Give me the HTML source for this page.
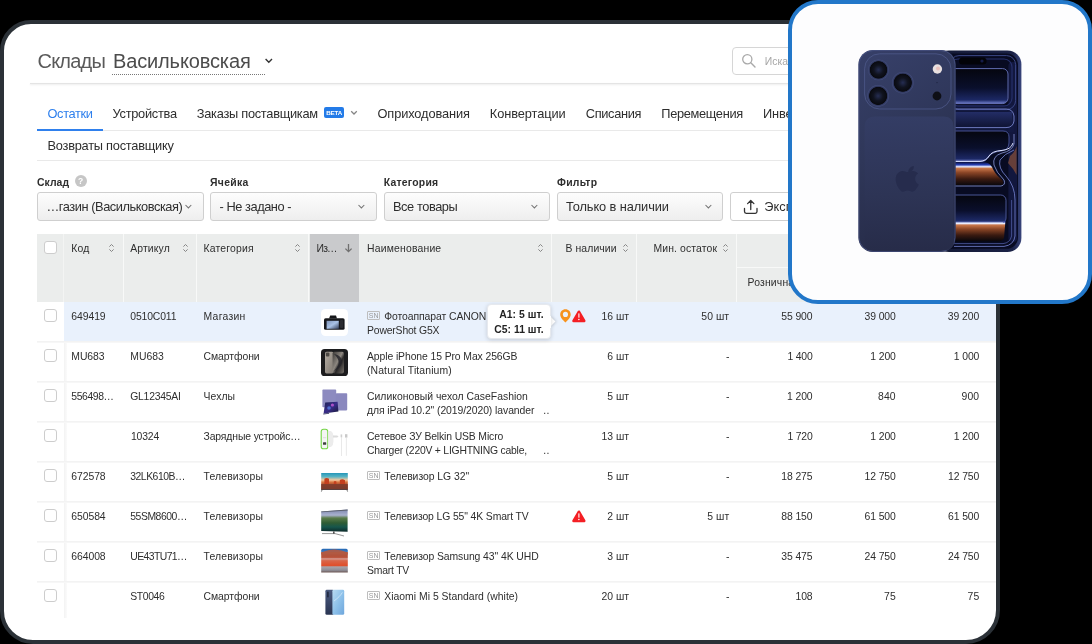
<!DOCTYPE html>
<html lang="ru"><head><meta charset="utf-8"><title>Склады</title>
<style>
html,body{margin:0;padding:0;background:#000;}
body{width:1092px;height:644px;position:relative;overflow:hidden;font-family:"Liberation Sans",sans-serif;}
#win{position:absolute;left:0;top:20px;width:1000px;height:624px;box-sizing:border-box;border:4px solid #2b3137;border-radius:31px 31px 34px 33px;background:#fff;overflow:hidden;}
#pg{position:absolute;left:-4px;top:-24px;width:1092px;height:644px;will-change:transform;}
#pg *{position:absolute;box-sizing:border-box;}
.t{white-space:nowrap;font-family:"Liberation Sans",sans-serif;}
.ln{height:1px;background:#e9e9e9;}
.sel{top:192.25px;width:166.5px;height:28.25px;border:1px solid #cfcfcf;border-radius:3px;background:linear-gradient(#fdfdfd,#eeeeee);}
.cb{left:43.6px;width:13.2px;height:13.2px;border:1px solid #cdcdcd;border-radius:3px;background:#fff;}
.vs{top:234px;width:1.2px;height:68px;background:#f8f9f8;}
.sn{width:12.75px;height:9.5px;border:1px solid #bdbdbd;border-radius:1px;font-size:7px;line-height:7.6px;text-align:center;color:#999;letter-spacing:-0.1px;font-family:"Liberation Sans",sans-serif;}
.rl{left:37px;width:959px;height:2px;background:linear-gradient(#f3f3f3 50%,#f7f7f7 50%);}
#card{position:absolute;left:788px;top:0;width:304px;height:304px;box-sizing:border-box;border:4px solid #2277c9;border-radius:30px;background:#fdfdfe;overflow:hidden;}
svg{overflow:visible;}

</style></head>
<body>
<div id="win"><div id="pg">
<!-- header -->
<div style="left:30px;top:82.5px;width:970px;height:1px;background:#e4e4e4;box-shadow:0 1px 2px rgba(0,0,0,.10);"></div>
<div style="left:732px;top:47px;width:240px;height:28px;border:1px solid #d6d6d6;border-radius:4px;background:#fff;"></div>
<svg style="left:741px;top:53px" width="16" height="16" viewBox="0 0 16 16"><circle cx="6.3" cy="6.3" r="4.6" fill="none" stroke="#a9a9a9" stroke-width="1.3"/><path d="M9.8 9.8 L14 14" stroke="#a9a9a9" stroke-width="1.4" stroke-linecap="round"/></svg>
<div style="left:112px;top:74px;width:153px;height:1px;border-top:1px dotted #777;"></div>
<svg style="left:264px;top:57px" width="10" height="8" viewBox="0 0 10 8"><path d="M1.6 2 L4.8 5.2 L8 2" fill="none" stroke="#333" stroke-width="1.4"/></svg>
<!-- tabs -->
<div class="ln" style="left:37px;top:130px;width:959px;"></div>
<div style="left:37px;top:129.3px;width:65.5px;height:2px;background:#2f80ed;"></div>
<div class="ln" style="left:37px;top:160px;width:959px;"></div>
<div style="left:324.25px;top:107px;width:19.75px;height:11px;background:#237be8;border-radius:2px;color:#fff;font-size:6.2px;line-height:12.4px;font-weight:700;text-align:center;letter-spacing:-0.15px;overflow:hidden;">BETA</div>
<svg style="left:349px;top:109px" width="10" height="8" viewBox="0 0 10 8"><path d="M2.2 2.2 L5 5 L7.8 2.2" fill="none" stroke="#858585" stroke-width="1.25"/></svg>
<!-- filters -->
<div style="left:74.6px;top:174.7px;width:12.2px;height:12.2px;border-radius:50%;background:#c6c6c6;color:#fff;font-size:8.5px;line-height:12.2px;font-weight:700;text-align:center;">?</div>
<div class="sel" style="left:37px;"></div>
<div class="sel" style="left:210.2px;width:166.4px;"></div>
<div class="sel" style="left:383.5px;width:166px;"></div>
<div class="sel" style="left:557px;width:166.3px;"></div>
<div style="left:730.2px;top:192.25px;width:100px;height:28.25px;border:1px solid #cfcfcf;border-radius:3px;background:#fff;"></div>
<svg style="left:183.5px;top:203px" width="9" height="7" viewBox="0 0 9 7"><path d="M1.5 2 L4.4 4.9 L7.3 2" fill="none" stroke="#747474" stroke-width="1.05"/></svg>
<svg style="left:356.6px;top:203px" width="9" height="7" viewBox="0 0 9 7"><path d="M1.5 2 L4.4 4.9 L7.3 2" fill="none" stroke="#747474" stroke-width="1.05"/></svg>
<svg style="left:529.9px;top:203px" width="9" height="7" viewBox="0 0 9 7"><path d="M1.5 2 L4.4 4.9 L7.3 2" fill="none" stroke="#747474" stroke-width="1.05"/></svg>
<svg style="left:703.6px;top:203px" width="9" height="7" viewBox="0 0 9 7"><path d="M1.5 2 L4.4 4.9 L7.3 2" fill="none" stroke="#747474" stroke-width="1.05"/></svg>
<svg style="left:743.3px;top:198.7px" width="16" height="16" viewBox="0 0 16 16"><path d="M1.5 9.5 V12.6 Q1.5 14.3 3.2 14.3 H12.3 Q14 14.3 14 12.6 V9.5" fill="none" stroke="#333" stroke-width="1.3" stroke-linecap="round"/><path d="M7.75 10.5 V1.6 M4.6 4.6 L7.75 1.5 L10.9 4.6" fill="none" stroke="#333" stroke-width="1.3" stroke-linecap="round" stroke-linejoin="round"/></svg>
<!-- table header -->
<div style="left:37px;top:234px;width:959px;height:68.4px;background:#ebedec;"></div>
<div style="left:309.5px;top:234px;width:49.5px;height:68.4px;background:#c9cacc;"></div>
<div class="vs" style="left:62.8px;width:1.7px;background:#f3f4f3;"></div>
<div class="vs" style="left:123px;"></div>
<div class="vs" style="left:196.2px;"></div>
<div class="vs" style="left:308.3px;"></div>
<div class="vs" style="left:551px;"></div>
<div class="vs" style="left:636px;"></div>
<div class="vs" style="left:736px;"></div>
<div style="left:737px;top:267px;width:259px;height:1.2px;background:#f8f9f8;"></div>
<div class="cb" style="top:241px;"></div>
<!-- rows -->
<div style="left:64px;top:302.4px;width:932px;height:39.2px;background:#e9f1fc;"></div>
<div style="left:64.4px;top:342px;width:3px;height:276px;background:linear-gradient(to right,#f3f3f3,#fbfbfb);"></div>
<div class="cb" style="top:309px;"></div>
<div class="cb" style="top:349px;"></div>
<div class="cb" style="top:389px;"></div>
<div class="cb" style="top:429px;"></div>
<div class="cb" style="top:469px;"></div>
<div class="cb" style="top:509px;"></div>
<div class="cb" style="top:549px;"></div>
<div class="cb" style="top:589px;"></div>
<div class="rl" style="top:341px;"></div>
<div class="rl" style="top:381px;"></div>
<div class="rl" style="top:421px;"></div>
<div class="rl" style="top:461px;"></div>
<div class="rl" style="top:501px;"></div>
<div class="rl" style="top:541px;"></div>
<div class="rl" style="top:581px;"></div>
<svg style="left:108.25px;top:243px" width="7" height="10" viewBox="0 0 7 10"><path d="M1.4 3.6 L3.5 1.5 L5.6 3.6 M1.4 6.4 L3.5 8.5 L5.6 6.4" fill="none" stroke="#858585" stroke-width="1"/></svg>
<svg style="left:181.5px;top:243px" width="7" height="10" viewBox="0 0 7 10"><path d="M1.4 3.6 L3.5 1.5 L5.6 3.6 M1.4 6.4 L3.5 8.5 L5.6 6.4" fill="none" stroke="#858585" stroke-width="1"/></svg>
<svg style="left:294.0px;top:243px" width="7" height="10" viewBox="0 0 7 10"><path d="M1.4 3.6 L3.5 1.5 L5.6 3.6 M1.4 6.4 L3.5 8.5 L5.6 6.4" fill="none" stroke="#858585" stroke-width="1"/></svg>
<svg style="left:536.5px;top:243px" width="7" height="10" viewBox="0 0 7 10"><path d="M1.4 3.6 L3.5 1.5 L5.6 3.6 M1.4 6.4 L3.5 8.5 L5.6 6.4" fill="none" stroke="#858585" stroke-width="1"/></svg>
<svg style="left:621.5px;top:243px" width="7" height="10" viewBox="0 0 7 10"><path d="M1.4 3.6 L3.5 1.5 L5.6 3.6 M1.4 6.4 L3.5 8.5 L5.6 6.4" fill="none" stroke="#858585" stroke-width="1"/></svg>
<svg style="left:721.5px;top:243px" width="7" height="10" viewBox="0 0 7 10"><path d="M1.4 3.6 L3.5 1.5 L5.6 3.6 M1.4 6.4 L3.5 8.5 L5.6 6.4" fill="none" stroke="#858585" stroke-width="1"/></svg>
<svg style="left:343.75px;top:243px" width="9" height="10" viewBox="0 0 9 10"><path d="M4.5 1 V8.6 M1.4 5.6 L4.5 8.7 L7.6 5.6" fill="none" stroke="#707070" stroke-width="1.3"/></svg>
<!-- tooltip -->
<div style="left:547px;top:318.2px;width:7px;height:7px;background:#fff;transform:rotate(45deg);box-shadow:1px -1px 3px rgba(0,0,0,.15);"></div>
<div style="left:486.75px;top:303.75px;width:64.25px;height:35.5px;background:#fff;border-radius:4px;box-shadow:0 1px 4px rgba(0,0,0,.16);border:1px solid #e6e9ee;"></div>
<div style="left:545px;top:316px;width:6px;height:12px;background:#fff;"></div>
<!-- pin + warning -->
<svg style="left:559.7px;top:308.8px" width="11" height="13.6" viewBox="0 0 11 13.6"><path d="M5.45 0.2 C2.4 0.2 0.2 2.5 0.2 5.4 C0.2 8.6 3.4 11.4 5.45 13.4 C7.5 11.4 10.7 8.6 10.7 5.4 C10.7 2.5 8.5 0.2 5.45 0.2 Z" fill="#f7931e"/><circle cx="5.45" cy="5.4" r="2.55" fill="#eaf2fc"/></svg>
<svg style="left:571.5px;top:309.5px" width="14" height="12.6" viewBox="0 0 14 12.6"><path d="M6.9 1.7 L12.3 10.9 H1.5 Z" fill="#f41f24" stroke="#f41f24" stroke-width="2.5" stroke-linejoin="round"/><rect x="6.35" y="3.3" width="1.1" height="4.5" rx=".55" fill="#fff"/><circle cx="6.9" cy="9.5" r=".75" fill="#fff"/></svg>
<svg style="left:571.5px;top:509.5px" width="14" height="12.6" viewBox="0 0 14 12.6"><path d="M6.9 1.7 L12.3 10.9 H1.5 Z" fill="#f41f24" stroke="#f41f24" stroke-width="2.5" stroke-linejoin="round"/><rect x="6.35" y="3.3" width="1.1" height="4.5" rx=".55" fill="#fff"/><circle cx="6.9" cy="9.5" r=".75" fill="#fff"/></svg>
<!-- thumbnails -->
<svg style="left:321px;top:309px" width="27" height="27" viewBox="0 0 27 27">
<defs><linearGradient id="gcam" x1="0" y1="0" x2="1" y2="1"><stop offset="0" stop-color="#7f93b8"/><stop offset=".5" stop-color="#a9c2e6"/><stop offset="1" stop-color="#36415c"/></linearGradient></defs>
<rect width="27" height="27" rx="4.5" fill="#fff"/>
<path d="M8 9.6 L9.2 6.6 H15 L16 9.6 Z" fill="#15161a"/>
<rect x="3" y="9.2" width="20.6" height="11.6" rx="1.6" fill="#17181c"/>
<rect x="5.6" y="11.8" width="12.2" height="8" fill="url(#gcam)"/>
<rect x="19" y="11" width="3.2" height="8" rx="1" fill="#2b2c31"/>
</svg>
<svg style="left:321px;top:349px" width="27" height="27" viewBox="0 0 27 27">
<defs><linearGradient id="gti" x1="0" y1="0" x2="1" y2="1"><stop offset="0" stop-color="#b5ada3"/><stop offset="1" stop-color="#7e7770"/></linearGradient>
<linearGradient id="gti2" x1="0" y1="0" x2="1" y2="1"><stop offset="0" stop-color="#3b3836"/><stop offset=".45" stop-color="#8d8780"/><stop offset=".6" stop-color="#2a2828"/><stop offset="1" stop-color="#77716b"/></linearGradient></defs>
<rect width="27" height="27" rx="3.6" fill="#1c1c1e"/>
<rect x="4" y="2.8" width="8.6" height="21.6" rx="1.6" fill="url(#gti)"/>
<rect x="4.8" y="3.6" width="3.6" height="3.8" rx="1" fill="#4c4844"/>
<rect x="11.6" y="2.8" width="11.4" height="21.6" rx="1.8" fill="url(#gti2)"/>
<path d="M13 5 C19 6 22 10 21 14 C20 18 16 21 13 22 C17 18 18 15 17.5 12 C17 9 15 7 13 5 Z" fill="#26242a" opacity=".85"/>
</svg>
<svg style="left:321px;top:388px" width="28" height="28" viewBox="0 0 28 28">
<defs><linearGradient id="gip" x1="0" y1="0" x2="1" y2="1"><stop offset="0" stop-color="#1b2350"/><stop offset=".5" stop-color="#3a2c8a"/><stop offset="1" stop-color="#141833"/></linearGradient></defs>
<rect x="1.4" y="1.6" width="13.8" height="17.6" rx=".8" fill="#8d8bc0"/>
<rect x="14.8" y="5.2" width="11.4" height="17.2" rx=".8" fill="#8a88be"/>
<path d="M4.2 14.6 L16.6 13.8 L17.4 23.4 L2.6 25.6 Z" fill="url(#gip)"/>
<circle cx="11.4" cy="17" r="1.6" fill="#c85ad8" opacity=".8"/><circle cx="8" cy="20" r="1.8" fill="#5a8af0" opacity=".7"/>
<path d="M2.4 25.6 L8 24.9 L8.2 25.8 L2.2 26.4 Z" fill="#3a3d66"/>
</svg>
<svg style="left:320px;top:428px" width="29" height="30" viewBox="0 0 29 30">
<rect x="1.2" y="1.2" width="6.6" height="19.6" rx="2.4" fill="#f4f5f4" stroke="#74d545" stroke-width="1.1"/>
<rect x="3" y="14.2" width="3.2" height="2.6" rx=".5" fill="#3c3f3c"/>
<rect x="3" y="9.2" width="3.2" height="1" fill="#dcdcdc"/>
<path d="M8.2 3 H11 Q13.4 4.6 13.4 8 V14 Q13.4 17.6 11 19 H8.2 Z" fill="#ececec"/>
<path d="M13 7.6 H17.2 L18.6 8.6 L17.2 9.6 H13 Z" fill="#dcdcdc"/>
<rect x="20.6" y="6.4" width="1.6" height="3" fill="#cfcfcf"/><rect x="21.1" y="9" width=".7" height="19" fill="#e0e0e0"/>
<rect x="25" y="6.2" width="2.4" height="3.4" fill="#c9c9c9"/><rect x="25.9" y="9.4" width=".7" height="18.4" fill="#e0e0e0"/>
</svg>
<svg style="left:321px;top:472px" width="27" height="21" viewBox="0 0 27 21">
<defs><linearGradient id="gtv1" x1="0" y1="0" x2="0" y2="1"><stop offset="0" stop-color="#2596b8"/><stop offset=".22" stop-color="#58b4c4"/><stop offset=".42" stop-color="#f1c9a0"/><stop offset=".55" stop-color="#d9763f"/><stop offset=".72" stop-color="#a2482e"/><stop offset="1" stop-color="#6e3a30"/></linearGradient></defs>
<rect x="0.2" y="1" width="26.6" height="16.6" fill="url(#gtv1)"/>
<path d="M3.4 12.5 V6.8 Q5.6 5 8 6.8 V12.5 Z M12.8 12.5 V9.4 Q14 8.4 15.4 9.4 V12.5 Z M18.8 12.5 V8 Q21.4 6.4 24 8.2 V12.5 Z" fill="#c4401f"/><rect x=".2" y="12" width="26.6" height="5.6" fill="#7c3c2c" opacity=".85"/>
<rect x=".2" y="17.2" width="26.6" height=".8" fill="#4a3a3a"/>
<path d="M1 18 L.4 19.6 M26 18 L26.6 19.6" stroke="#555" stroke-width=".8"/>
</svg>
<svg style="left:321px;top:509px" width="27" height="28" viewBox="0 0 27 28">
<defs><linearGradient id="gtv2" x1="0" y1="0" x2="0" y2="1"><stop offset="0" stop-color="#7f88ae"/><stop offset=".25" stop-color="#a9b1cf"/><stop offset=".38" stop-color="#5a7c4a"/><stop offset=".6" stop-color="#2f5c34"/><stop offset=".78" stop-color="#17564c"/><stop offset="1" stop-color="#0d2a2a"/></linearGradient></defs>
<path d="M0.2 2.6 L26.6 0.6 V22.8 L0.2 22 Z" fill="url(#gtv2)"/>
<path d="M0.2 2.6 L26.6 0.6 V1.4 L0.2 3.3 Z" fill="#5b5f6b"/>
<path d="M1 24.6 H14 L23 27" fill="none" stroke="#8b8b8b" stroke-width=".9"/>
<rect x="12" y="22.4" width="1.6" height="2.4" fill="#555"/>
</svg>
<svg style="left:321px;top:548px" width="27" height="26" viewBox="0 0 27 26">
<defs><linearGradient id="gtv3" x1="0" y1="0" x2="0" y2="1"><stop offset="0" stop-color="#2468b4"/><stop offset=".12" stop-color="#3b78bc"/><stop offset=".16" stop-color="#a9563f"/><stop offset=".36" stop-color="#b9523a"/><stop offset=".42" stop-color="#d79a90"/><stop offset=".5" stop-color="#d8664a"/><stop offset=".7" stop-color="#e04e2a"/><stop offset=".76" stop-color="#a8a4aa"/><stop offset=".9" stop-color="#8f8d96"/><stop offset="1" stop-color="#6b5450"/></linearGradient></defs>
<path d="M0.2 2.4 Q.2 .8 1.8 .8 H25.2 Q26.8 .8 26.8 2.4 V24.6 H.2 Z" fill="url(#gtv3)"/>
<path d="M.2 4.4 Q8 1.2 14 1.4 Q21 1.6 26.8 4.6 V6.4 H.2 Z" fill="#b25a42" opacity=".9"/>
</svg>
<svg style="left:324.6px;top:589px" width="20" height="27" viewBox="0 0 20 27">
<defs><linearGradient id="gmi1" x1="0" y1="0" x2="0" y2="1"><stop offset="0" stop-color="#4b5b80"/><stop offset="1" stop-color="#2a3552"/></linearGradient>
<linearGradient id="gmi2" x1="0" y1="0" x2="1" y2="1"><stop offset="0" stop-color="#b8daf2"/><stop offset=".5" stop-color="#8fc2ea"/><stop offset="1" stop-color="#6ea6dc"/></linearGradient></defs>
<rect x=".4" y=".8" width="8.4" height="25" rx="1.4" fill="url(#gmi1)"/>
<rect x="2.2" y="2.4" width="1.4" height="6" rx=".7" fill="#1b2236"/>
<rect x="7.4" y=".8" width="11.8" height="25" rx="1.4" fill="url(#gmi2)"/>
<path d="M9 12 C13 9 16 6 17.4 3.4" fill="none" stroke="#d9ecfa" stroke-width=".9" opacity=".8"/>
</svg>

<div id="texts">
<span class="t" style="left:37.50px;top:48px;font-size:20px;line-height:26px;color:#5a5a5a;letter-spacing:-0.778px;">Склады</span>
<span class="t" style="left:113.00px;top:48px;font-size:20px;line-height:26px;color:#4c4c4c;letter-spacing:-0.137px;">Васильковская</span>
<span class="t" style="left:47.50px;top:104px;font-size:12.8px;line-height:19px;color:#2f80ed;letter-spacing:-0.345px;">Остатки</span>
<span class="t" style="left:112.50px;top:104px;font-size:12.8px;line-height:19px;color:#2e2e2e;letter-spacing:-0.260px;">Устройства</span>
<span class="t" style="left:196.75px;top:104px;font-size:12.8px;line-height:19px;color:#2e2e2e;letter-spacing:-0.265px;">Заказы поставщикам</span>
<span class="t" style="left:377.50px;top:104px;font-size:12.8px;line-height:19px;color:#2e2e2e;letter-spacing:-0.108px;">Оприходования</span>
<span class="t" style="left:489.75px;top:104px;font-size:12.8px;line-height:19px;color:#2e2e2e;letter-spacing:-0.079px;">Конвертации</span>
<span class="t" style="left:585.75px;top:104px;font-size:12.8px;line-height:19px;color:#2e2e2e;letter-spacing:-0.329px;">Списания</span>
<span class="t" style="left:661.25px;top:104px;font-size:12.8px;line-height:19px;color:#2e2e2e;letter-spacing:-0.320px;">Перемещения</span>
<span class="t" style="left:763.00px;top:104px;font-size:12.8px;line-height:19px;color:#2e2e2e;letter-spacing:-0.159px;">Инвентаризации</span>
<span class="t" style="left:47.50px;top:136px;font-size:12.8px;line-height:19px;color:#2e2e2e;letter-spacing:-0.239px;">Возвраты поставщику</span>
<span class="t" style="left:764.75px;top:54px;font-size:10.4px;line-height:15px;color:#a6a6a6;letter-spacing:-0.012px;">Искать</span>
<span class="t" style="left:37.00px;top:175px;font-size:10.4px;line-height:15px;color:#2e2e2e;font-weight:700;letter-spacing:0.058px;">Склад</span>
<span class="t" style="left:210.00px;top:175px;font-size:10.4px;line-height:15px;color:#2e2e2e;font-weight:700;letter-spacing:0.324px;">Ячейка</span>
<span class="t" style="left:383.75px;top:175px;font-size:10.4px;line-height:15px;color:#2e2e2e;font-weight:700;letter-spacing:0.239px;">Категория</span>
<span class="t" style="left:557.00px;top:175px;font-size:10.4px;line-height:15px;color:#2e2e2e;font-weight:700;letter-spacing:0.261px;">Фильтр</span>
<span class="t" style="left:46.50px;top:197px;font-size:12.8px;line-height:19px;color:#2e2e2e;letter-spacing:-0.439px;">…газин (Васильковская)</span>
<span class="t" style="left:219.50px;top:197px;font-size:12.8px;line-height:19px;color:#2e2e2e;letter-spacing:-0.439px;">- Не задано -</span>
<span class="t" style="left:393.00px;top:197px;font-size:12.8px;line-height:19px;color:#2e2e2e;letter-spacing:-0.418px;">Все товары</span>
<span class="t" style="left:566.00px;top:197px;font-size:12.8px;line-height:19px;color:#2e2e2e;letter-spacing:-0.092px;">Только в наличии</span>
<span class="t" style="left:764.25px;top:197px;font-size:12.8px;line-height:19px;color:#2e2e2e;letter-spacing:0.072px;">Экспорт</span>
<span class="t" style="left:71.25px;top:241px;font-size:10.4px;line-height:15px;color:#2e2e2e;letter-spacing:0.143px;">Код</span>
<span class="t" style="left:130.25px;top:241px;font-size:10.4px;line-height:15px;color:#2e2e2e;letter-spacing:0.121px;">Артикул</span>
<span class="t" style="left:203.50px;top:241px;font-size:10.4px;line-height:15px;color:#2e2e2e;letter-spacing:0.197px;">Категория</span>
<span class="t" style="left:316.50px;top:241px;font-size:10.4px;line-height:15px;color:#2e2e2e;letter-spacing:-0.842px;">Из…</span>
<span class="t" style="left:367.00px;top:241px;font-size:10.4px;line-height:15px;color:#2e2e2e;letter-spacing:0.193px;">Наименование</span>
<span class="t" style="left:565.50px;top:241px;font-size:10.4px;line-height:15px;color:#2e2e2e;letter-spacing:0.096px;">В наличии</span>
<span class="t" style="left:653.50px;top:241px;font-size:10.4px;line-height:15px;color:#2e2e2e;letter-spacing:0.124px;">Мин. остаток</span>
<span class="t" style="left:747.50px;top:275px;font-size:10.4px;line-height:15px;color:#2e2e2e;letter-spacing:0.178px;">Розничная</span>
<span class="t" style="left:71.25px;top:309px;font-size:10.4px;line-height:15px;color:#2e2e2e;letter-spacing:-0.056px;">649419</span>
<span class="t" style="left:130.25px;top:309px;font-size:10.4px;line-height:15px;color:#2e2e2e;letter-spacing:-0.136px;">0510C011</span>
<span class="t" style="left:203.50px;top:309px;font-size:10.4px;line-height:15px;color:#2e2e2e;letter-spacing:0.287px;">Магазин</span>
<span class="t" style="left:384.25px;top:309px;font-size:10.4px;line-height:15px;color:#2e2e2e;letter-spacing:-0.079px;">Фотоаппарат CANON</span>
<span class="t" style="left:367.00px;top:323px;font-size:10.4px;line-height:15px;color:#2e2e2e;letter-spacing:-0.167px;">PowerShot G5X</span>
<span class="t" style="left:601.60px;top:309px;font-size:10.4px;line-height:15px;color:#2e2e2e;letter-spacing:-0.039px;">16 шт</span>
<span class="t" style="left:701.35px;top:309px;font-size:10.4px;line-height:15px;color:#2e2e2e;letter-spacing:0.061px;">50 шт</span>
<span class="t" style="left:781.35px;top:309px;font-size:10.4px;line-height:15px;color:#2e2e2e;letter-spacing:-0.114px;">55 900</span>
<span class="t" style="left:864.60px;top:309px;font-size:10.4px;line-height:15px;color:#2e2e2e;letter-spacing:-0.114px;">39 000</span>
<span class="t" style="left:947.85px;top:309px;font-size:10.4px;line-height:15px;color:#2e2e2e;letter-spacing:-0.072px;">39 200</span>
<span class="t" style="left:71.25px;top:349px;font-size:10.4px;line-height:15px;color:#2e2e2e;letter-spacing:-0.030px;">MU683</span>
<span class="t" style="left:130.25px;top:349px;font-size:10.4px;line-height:15px;color:#2e2e2e;letter-spacing:0.020px;">MU683</span>
<span class="t" style="left:203.50px;top:349px;font-size:10.4px;line-height:15px;color:#2e2e2e;letter-spacing:-0.057px;">Смартфони</span>
<span class="t" style="left:367.00px;top:349px;font-size:10.4px;line-height:15px;color:#2e2e2e;letter-spacing:-0.094px;">Apple iPhone 15 Pro Max 256GB</span>
<span class="t" style="left:367.00px;top:363px;font-size:10.4px;line-height:15px;color:#2e2e2e;letter-spacing:0.126px;">(Natural Titanium)</span>
<span class="t" style="left:607.35px;top:349px;font-size:10.4px;line-height:15px;color:#2e2e2e;letter-spacing:-0.041px;">6 шт</span>
<span class="t" style="left:726.00px;top:349px;font-size:10.4px;line-height:15px;color:#2e2e2e;letter-spacing:0.000px;">-</span>
<span class="t" style="left:787.60px;top:349px;font-size:10.4px;line-height:15px;color:#2e2e2e;letter-spacing:-0.233px;">1 400</span>
<span class="t" style="left:870.35px;top:349px;font-size:10.4px;line-height:15px;color:#2e2e2e;letter-spacing:-0.133px;">1 200</span>
<span class="t" style="left:953.85px;top:349px;font-size:10.4px;line-height:15px;color:#2e2e2e;letter-spacing:-0.133px;">1 000</span>
<span class="t" style="left:71.25px;top:389px;font-size:10.4px;line-height:15px;color:#2e2e2e;letter-spacing:-0.390px;">556498…</span>
<span class="t" style="left:130.25px;top:389px;font-size:10.4px;line-height:15px;color:#2e2e2e;letter-spacing:-0.248px;">GL12345AI</span>
<span class="t" style="left:203.50px;top:389px;font-size:10.4px;line-height:15px;color:#2e2e2e;letter-spacing:0.079px;">Чехлы</span>
<span class="t" style="left:367.00px;top:389px;font-size:10.4px;line-height:15px;color:#2e2e2e;letter-spacing:0.009px;">Силиконовый чехол CaseFashion</span>
<span class="t" style="left:367.00px;top:403px;font-size:10.4px;line-height:15px;color:#2e2e2e;letter-spacing:-0.073px;">для iPad 10.2&quot; (2019/2020) lavander</span>
<span class="t" style="left:543.20px;top:403px;font-size:10.4px;line-height:15px;color:#2e2e2e;letter-spacing:0.409px;">..</span>
<span class="t" style="left:607.35px;top:389px;font-size:10.4px;line-height:15px;color:#2e2e2e;letter-spacing:-0.041px;">5 шт</span>
<span class="t" style="left:726.00px;top:389px;font-size:10.4px;line-height:15px;color:#2e2e2e;letter-spacing:0.000px;">-</span>
<span class="t" style="left:787.10px;top:389px;font-size:10.4px;line-height:15px;color:#2e2e2e;letter-spacing:-0.133px;">1 200</span>
<span class="t" style="left:878.10px;top:389px;font-size:10.4px;line-height:15px;color:#2e2e2e;letter-spacing:0.085px;">840</span>
<span class="t" style="left:961.60px;top:389px;font-size:10.4px;line-height:15px;color:#2e2e2e;letter-spacing:0.085px;">900</span>
<span class="t" style="left:131.00px;top:429px;font-size:10.4px;line-height:15px;color:#2e2e2e;letter-spacing:-0.161px;">10324</span>
<span class="t" style="left:203.50px;top:429px;font-size:10.4px;line-height:15px;color:#2e2e2e;letter-spacing:-0.127px;">Зарядные устройс…</span>
<span class="t" style="left:367.00px;top:429px;font-size:10.4px;line-height:15px;color:#2e2e2e;letter-spacing:-0.133px;">Сетевое ЗУ Belkin USB Micro</span>
<span class="t" style="left:367.00px;top:443px;font-size:10.4px;line-height:15px;color:#2e2e2e;letter-spacing:-0.229px;">Charger (220V + LIGHTNING cable,</span>
<span class="t" style="left:543.20px;top:443px;font-size:10.4px;line-height:15px;color:#2e2e2e;letter-spacing:0.409px;">..</span>
<span class="t" style="left:601.60px;top:429px;font-size:10.4px;line-height:15px;color:#2e2e2e;letter-spacing:-0.039px;">13 шт</span>
<span class="t" style="left:726.00px;top:429px;font-size:10.4px;line-height:15px;color:#2e2e2e;letter-spacing:0.000px;">-</span>
<span class="t" style="left:787.60px;top:429px;font-size:10.4px;line-height:15px;color:#2e2e2e;letter-spacing:-0.233px;">1 720</span>
<span class="t" style="left:870.35px;top:429px;font-size:10.4px;line-height:15px;color:#2e2e2e;letter-spacing:-0.133px;">1 200</span>
<span class="t" style="left:953.85px;top:429px;font-size:10.4px;line-height:15px;color:#2e2e2e;letter-spacing:-0.133px;">1 200</span>
<span class="t" style="left:71.25px;top:469px;font-size:10.4px;line-height:15px;color:#2e2e2e;letter-spacing:-0.056px;">672578</span>
<span class="t" style="left:130.25px;top:469px;font-size:10.4px;line-height:15px;color:#2e2e2e;letter-spacing:-0.482px;">32LK610B…</span>
<span class="t" style="left:203.50px;top:469px;font-size:10.4px;line-height:15px;color:#2e2e2e;letter-spacing:0.155px;">Телевизоры</span>
<span class="t" style="left:384.25px;top:469px;font-size:10.4px;line-height:15px;color:#2e2e2e;letter-spacing:-0.038px;">Телевизор LG 32&quot;</span>
<span class="t" style="left:607.35px;top:469px;font-size:10.4px;line-height:15px;color:#2e2e2e;letter-spacing:-0.041px;">5 шт</span>
<span class="t" style="left:726.00px;top:469px;font-size:10.4px;line-height:15px;color:#2e2e2e;letter-spacing:0.000px;">-</span>
<span class="t" style="left:781.35px;top:469px;font-size:10.4px;line-height:15px;color:#2e2e2e;letter-spacing:-0.114px;">18 275</span>
<span class="t" style="left:864.60px;top:469px;font-size:10.4px;line-height:15px;color:#2e2e2e;letter-spacing:-0.114px;">12 750</span>
<span class="t" style="left:948.10px;top:469px;font-size:10.4px;line-height:15px;color:#2e2e2e;letter-spacing:-0.114px;">12 750</span>
<span class="t" style="left:71.25px;top:509px;font-size:10.4px;line-height:15px;color:#2e2e2e;letter-spacing:-0.056px;">650584</span>
<span class="t" style="left:130.25px;top:509px;font-size:10.4px;line-height:15px;color:#2e2e2e;letter-spacing:-0.451px;">55SM8600…</span>
<span class="t" style="left:203.50px;top:509px;font-size:10.4px;line-height:15px;color:#2e2e2e;letter-spacing:0.155px;">Телевизоры</span>
<span class="t" style="left:384.25px;top:509px;font-size:10.4px;line-height:15px;color:#2e2e2e;letter-spacing:-0.117px;">Телевизор LG 55&quot; 4K Smart TV</span>
<span class="t" style="left:607.35px;top:509px;font-size:10.4px;line-height:15px;color:#2e2e2e;letter-spacing:-0.041px;">2 шт</span>
<span class="t" style="left:707.35px;top:509px;font-size:10.4px;line-height:15px;color:#2e2e2e;letter-spacing:0.021px;">5 шт</span>
<span class="t" style="left:781.35px;top:509px;font-size:10.4px;line-height:15px;color:#2e2e2e;letter-spacing:-0.114px;">88 150</span>
<span class="t" style="left:864.60px;top:509px;font-size:10.4px;line-height:15px;color:#2e2e2e;letter-spacing:-0.114px;">61 500</span>
<span class="t" style="left:948.10px;top:509px;font-size:10.4px;line-height:15px;color:#2e2e2e;letter-spacing:-0.114px;">61 500</span>
<span class="t" style="left:71.25px;top:549px;font-size:10.4px;line-height:15px;color:#2e2e2e;letter-spacing:-0.056px;">664008</span>
<span class="t" style="left:130.25px;top:549px;font-size:10.4px;line-height:15px;color:#2e2e2e;letter-spacing:-0.577px;">UE43TU71…</span>
<span class="t" style="left:203.50px;top:549px;font-size:10.4px;line-height:15px;color:#2e2e2e;letter-spacing:0.155px;">Телевизоры</span>
<span class="t" style="left:384.25px;top:549px;font-size:10.4px;line-height:15px;color:#2e2e2e;letter-spacing:-0.076px;">Телевизор Samsung 43&quot; 4K UHD</span>
<span class="t" style="left:367.00px;top:563px;font-size:10.4px;line-height:15px;color:#2e2e2e;letter-spacing:-0.200px;">Smart TV</span>
<span class="t" style="left:607.35px;top:549px;font-size:10.4px;line-height:15px;color:#2e2e2e;letter-spacing:-0.041px;">3 шт</span>
<span class="t" style="left:726.00px;top:549px;font-size:10.4px;line-height:15px;color:#2e2e2e;letter-spacing:0.000px;">-</span>
<span class="t" style="left:781.35px;top:549px;font-size:10.4px;line-height:15px;color:#2e2e2e;letter-spacing:-0.114px;">35 475</span>
<span class="t" style="left:864.60px;top:549px;font-size:10.4px;line-height:15px;color:#2e2e2e;letter-spacing:-0.114px;">24 750</span>
<span class="t" style="left:948.10px;top:549px;font-size:10.4px;line-height:15px;color:#2e2e2e;letter-spacing:-0.114px;">24 750</span>
<span class="t" style="left:130.25px;top:589px;font-size:10.4px;line-height:15px;color:#2e2e2e;letter-spacing:-0.384px;">ST0046</span>
<span class="t" style="left:203.50px;top:589px;font-size:10.4px;line-height:15px;color:#2e2e2e;letter-spacing:-0.057px;">Смартфони</span>
<span class="t" style="left:384.25px;top:589px;font-size:10.4px;line-height:15px;color:#2e2e2e;letter-spacing:0.016px;">Xiaomi Mi 5 Standard (white)</span>
<span class="t" style="left:601.60px;top:589px;font-size:10.4px;line-height:15px;color:#2e2e2e;letter-spacing:-0.039px;">20 шт</span>
<span class="t" style="left:726.00px;top:589px;font-size:10.4px;line-height:15px;color:#2e2e2e;letter-spacing:0.000px;">-</span>
<span class="t" style="left:795.60px;top:589px;font-size:10.4px;line-height:15px;color:#2e2e2e;letter-spacing:-0.165px;">108</span>
<span class="t" style="left:884.10px;top:589px;font-size:10.4px;line-height:15px;color:#2e2e2e;letter-spacing:0.019px;">75</span>
<span class="t" style="left:967.60px;top:589px;font-size:10.4px;line-height:15px;color:#2e2e2e;letter-spacing:0.019px;">75</span>
<span class="t" style="left:499.25px;top:307px;font-size:10.4px;line-height:15px;color:#222;font-weight:700;letter-spacing:0.035px;">A1: 5 шт.</span>
<span class="t" style="left:494.25px;top:322px;font-size:10.4px;line-height:15px;color:#222;font-weight:700;letter-spacing:0.012px;">C5: 11 шт.</span>
<span class="sn" style="left:367.25px;top:310.80px">SN</span>
<span class="sn" style="left:367.25px;top:470.80px">SN</span>
<span class="sn" style="left:367.25px;top:510.80px">SN</span>
<span class="sn" style="left:367.25px;top:550.80px">SN</span>
<span class="sn" style="left:367.25px;top:590.80px">SN</span>
</div>
<!--OVER--></div>
</div>
<div id="card">
<svg style="position:absolute;left:0;top:0" width="296" height="296" viewBox="792 4 296 296">
<defs>
<linearGradient id="pb" x1="0" y1="0" x2=".35" y2="1"><stop offset="0" stop-color="#363f68"/><stop offset=".5" stop-color="#2f3759"/><stop offset="1" stop-color="#262b47"/></linearGradient><clipPath id="bodyclip"><rect x="858.4" y="50" width="97.2" height="202" rx="14.5"/></clipPath>
<linearGradient id="pl" x1="0" y1="0" x2="0" y2="1"><stop offset="0" stop-color="#343d65"/><stop offset=".6" stop-color="#2d3455"/><stop offset="1" stop-color="#272c49"/></linearGradient>
<linearGradient id="pc" x1="0" y1="0" x2="1" y2="1"><stop offset="0" stop-color="#374069"/><stop offset="1" stop-color="#2e3659"/></linearGradient>
<radialGradient id="ln" cx=".5" cy=".5" r=".5"><stop offset="0" stop-color="#252d52"/><stop offset=".45" stop-color="#10131f"/><stop offset=".8" stop-color="#090a10"/><stop offset=".86" stop-color="#2b3358"/><stop offset="1" stop-color="#434d7c"/></radialGradient>
<linearGradient id="fr" x1="0" y1="0" x2="1" y2="0"><stop offset="0" stop-color="#141a36"/><stop offset=".9" stop-color="#1a2145"/><stop offset="1" stop-color="#39457c"/></linearGradient>
<linearGradient id="or1" x1="0" y1="0" x2="0" y2="1"><stop offset="0" stop-color="#0a0f3a"/><stop offset=".12" stop-color="#2740b8"/><stop offset=".2" stop-color="#e9ecff"/><stop offset=".27" stop-color="#c9774a"/><stop offset=".45" stop-color="#8a4526"/><stop offset=".72" stop-color="#3a1a10"/><stop offset="1" stop-color="#06060c"/></linearGradient>
<linearGradient id="bl1" x1="0" y1="0" x2="0" y2="1"><stop offset="0" stop-color="#05060f"/><stop offset=".55" stop-color="#0a0f2c"/><stop offset=".9" stop-color="#1c2864"/><stop offset="1" stop-color="#6d7bc8"/></linearGradient>
<linearGradient id="bl2" x1="0" y1="0" x2="0" y2="1"><stop offset="0" stop-color="#232d66"/><stop offset="1" stop-color="#101536"/></linearGradient>
</defs>
<!-- front (display) phone -->
<rect x="935" y="50.4" width="86.4" height="201.6" rx="14" fill="url(#fr)"/>
<rect x="938" y="53.6" width="80" height="195.2" rx="11.5" fill="#080b22"/><rect x="1008.4" y="62" width="8.6" height="180" rx="4" fill="#1b2356" opacity=".55"/><rect x="950" y="105" width="64" height="27" fill="#141a44" opacity=".8"/>
<!-- screen pattern -->
<rect x="950" y="55.6" width="65.6" height="54" rx="9" fill="none" stroke="#3a4684" stroke-width="1"/>
<rect x="950" y="59" width="62" height="47" rx="8" fill="none" stroke="#26306a" stroke-width="1.2"/>
<rect x="950" y="69" width="57.6" height="34.4" rx="5" fill="url(#bl1)"/>
<rect x="950" y="68.6" width="58" height="35" rx="5.4" fill="none" stroke="#6a76c0" stroke-width=".9"/>
<rect x="950" y="112" width="62" height="14.6" fill="url(#bl2)"/>
<path d="M954 109 H1006 Q1013 109 1014 116 V121 Q1013 127.6 1006 127.6 H954" fill="none" stroke="#7683cc" stroke-width=".9"/>
<path d="M954 131 H1003 Q1009 131 1009 137 V143 Q1009 150 1001 151 Q991 152 988 158 Q986 161.6 980 161.8 H954" fill="url(#bl1)" stroke="#5562ae" stroke-width=".8"/>
<path d="M954 161.4 H980 Q986 161 989 156 Q992 151 1002 150.4 Q1011 149.6 1013 143" fill="none" stroke="#dfe4ff" stroke-width="1"/>
<path d="M954 162 H983 Q989 162 992 167 Q995 174 1000 178 Q1004 181 1003 184 L1002 185.6 H954 Z" fill="url(#or1)"/>
<path d="M954 186 H1001 Q1006 185 1004 180 Q996 172 994 165 Q992 156 1002 153 Q1012 151 1014 144 V134" fill="none" stroke="#8d99dc" stroke-width=".8"/>
<path d="M1014 150 Q1004 154 1000 160 Q998 168 1006 176 Q1015 186 1015 200 V236 Q1014 245 1004 246.4 H954" fill="none" stroke="#6b78c2" stroke-width=".9"/>
<path d="M1010 156 Q1015 152 1016.6 146 V175 Q1013 168 1008 163 Z" fill="#7c4a3a" opacity=".8"/>
<rect x="950" y="195.2" width="55.8" height="28" rx="5" fill="url(#bl1)"/>
<rect x="950" y="195" width="56" height="28.4" rx="5.2" fill="none" stroke="#5c69b4" stroke-width=".8"/>
<path d="M954 222.8 H1002 Q1005 222.4 1005.6 219 L1004 238 Q1003 241 999 241.4 H954 Z" fill="url(#or1)"/>
<path d="M954 223 H1003" stroke="#eef0ff" stroke-width="1"/>
<path d="M954 243.6 H1003 Q1010 243 1011.6 236 V200" fill="none" stroke="#4e5aa2" stroke-width=".8"/>
<!-- dynamic island -->
<rect x="959" y="57.4" width="27.6" height="7.2" rx="3.6" fill="#020308"/>
<circle cx="982" cy="61" r="1.6" fill="#141c4a"/>
<!-- back phone -->
<rect x="858.4" y="50" width="97.2" height="202" rx="14.5" fill="url(#pb)"/>
<rect x="859" y="50.6" width="96" height="200.8" rx="14" fill="none" stroke="#4a5587" stroke-width=".9" opacity=".8"/>
<path d="M864.6 244 V127 Q864.6 116.4 875 116.4 H944 Q953.6 116.4 953.6 127 V244 Q953.6 250 946 250 H872 Q864.6 250 864.6 244 Z" fill="url(#pl)" opacity=".95" clip-path="url(#bodyclip)"/>
<rect x="858.4" y="228" width="97.2" height="24" rx="0" fill="#252a46" opacity=".0"/>
<!-- camera plateau -->
<rect x="864.6" y="53.8" width="86.4" height="55.2" rx="15" fill="url(#pc)" stroke="#4b5686" stroke-width=".9"/>
<circle cx="878.5" cy="69.9" r="10.4" fill="url(#ln)"/>
<circle cx="902.8" cy="82.7" r="10.8" fill="url(#ln)"/>
<circle cx="878.1" cy="95.9" r="10.8" fill="url(#ln)"/>
<circle cx="937.4" cy="69" r="4.7" fill="#e8e0e0"/><circle cx="938" cy="68.6" r="2" fill="#e9b9b4" opacity=".8"/>
<circle cx="937" cy="96" r="4.4" fill="#0e0f16"/>
<circle cx="937" cy="82.6" r=".7" fill="#1c2240"/>
<!-- apple logo -->
<g fill="#262c4d" transform="translate(898.6 166) scale(1.04)">
<path d="M14.6 0 C14.8 1.6 14.1 3.1 13.2 4.2 C12.2 5.3 10.7 6.1 9.3 6 C9.1 4.5 9.9 2.900 10.800 1.9 C11.800 0.800 13.400 0.100 14.600 0 Z"/>
<path d="M19.4 17.7 C18.800 19.100 18.500 19.700 17.700 20.900 C16.600 22.600 15.100 24.700 13.200 24.700 C11.500 24.700 11.100 23.600 8.800 23.600 C6.500 23.600 6 24.700 4.300 24.700 C2.400 24.700 1 22.800 -0.100 21.100 C-3.200 16.400 -3.500 10.900 -1.600 8 C-0.300 5.900 1.800 4.700 3.800 4.700 C5.800 4.700 7.100 5.800 8.800 5.800 C10.400 5.800 11.400 4.700 13.800 4.700 C15.600 4.700 17.400 5.700 18.800 7.300 C14.500 9.700 15.200 15.900 19.400 17.700 Z"/>
</g>
</svg>
</div>

</body></html>
